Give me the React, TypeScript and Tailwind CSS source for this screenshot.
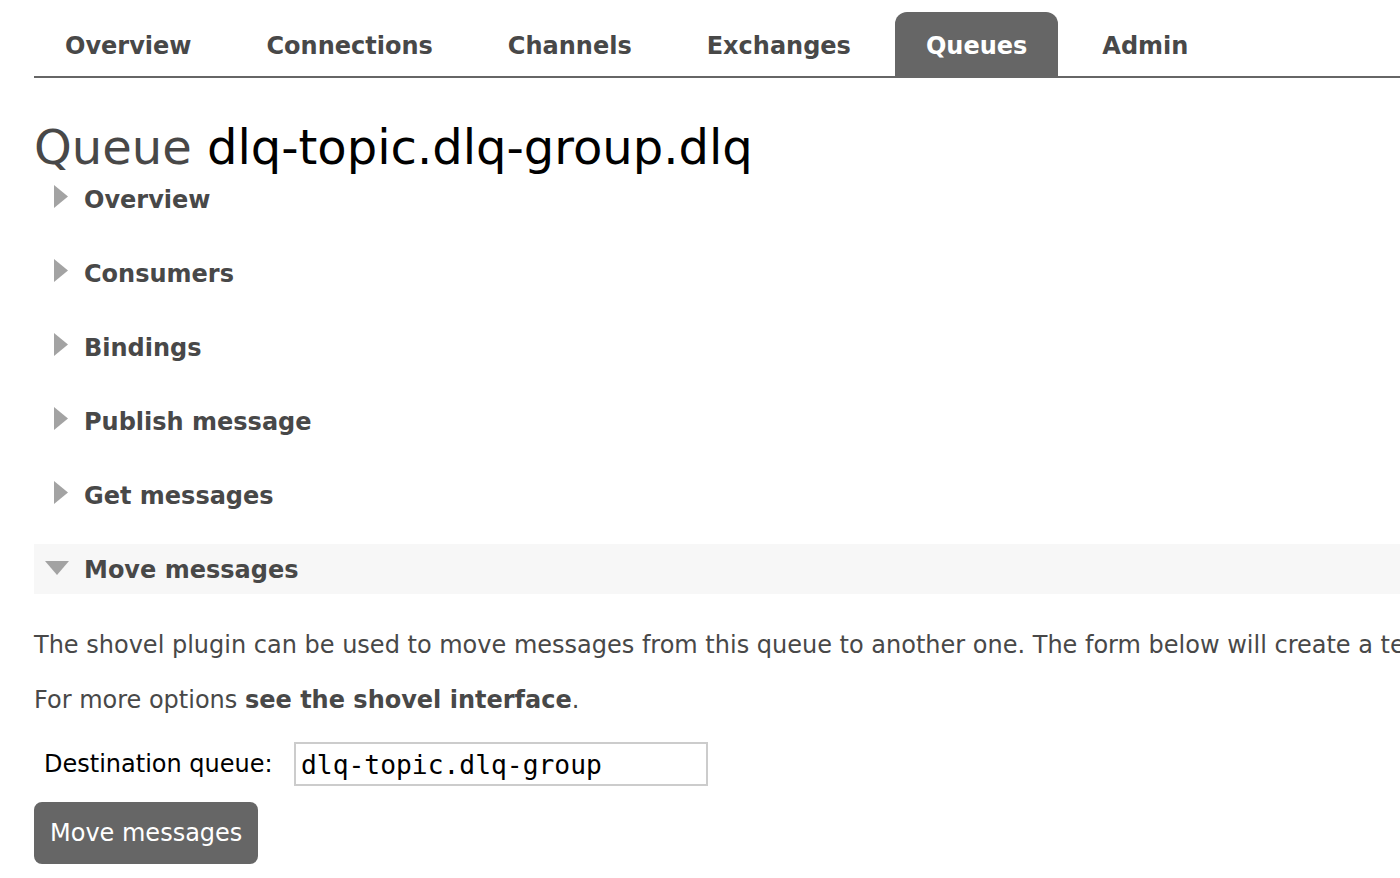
import React from "react";

const tabs = ["Overview", "Connections", "Channels", "Exchanges", "Queues", "Admin"];
const sections = ["Overview", "Consumers", "Bindings", "Publish message", "Get messages"];

function RightArrow() {
  return (
    <svg width="14" height="23" viewBox="0 0 14 23" className="shrink-0">
      <path d="M0 0 L14 11.5 L0 23 Z" fill="#a3a3a3" />
    </svg>
  );
}

function DownArrow() {
  return (
    <svg width="24" height="14" viewBox="0 0 24 14" className="shrink-0">
      <path d="M0 0 L24 0 L12 14 Z" fill="#a3a3a3" />
    </svg>
  );
}

export default function App() {
  return (
    <div className="w-[1400px] h-[878px] overflow-hidden bg-white text-[#484848] font-['DejaVu_Sans',Verdana,sans-serif] whitespace-nowrap">
      <div className="pl-[34px]">
        {/* tabs */}
        <div className="flex gap-[13px] pt-[12px] border-b-2 border-[#666]">
          {tabs.map((t) => (
            <div
              key={t}
              className={`h-[64px] px-[31px] pt-[3px] flex items-center rounded-t-[12px] text-[24px] font-bold ${
                t === "Queues" ? "bg-[#666] text-white" : "text-[#484848]"
              }`}
            >
              {t}
            </div>
          ))}
        </div>

        <h1 className="mt-[41px] text-[48px] leading-[56px] font-normal">
          Queue <span className="text-black">dlq-topic.dlq-group.dlq</span>
        </h1>

        <div className="flex flex-col gap-[24px] mt-[-1px]">
          {sections.map((s) => (
            <div key={s} className="h-[50px] flex items-center pl-[20px] gap-[16px]">
              <div className="mt-[-5px]">
                <RightArrow />
              </div>
              <span className="text-[24px] font-bold pt-[2px]">{s}</span>
            </div>
          ))}
          <div className="h-[50px] flex items-center pl-[11px] gap-[15px] bg-[#f7f7f7]">
            <div className="mt-[-2px]">
              <DownArrow />
            </div>
            <span className="text-[24px] font-bold pt-[2px]">Move messages</span>
          </div>
        </div>

        <div className="text-[24px] leading-[30px]">
          <p className="mt-[36px]">
            The shovel plugin can be used to move messages from this queue to another one. The form below will create a temporary shovel to move messages to another queue on the same virtual host, with default settings.
          </p>
          <p className="mt-[25px]">
            For more options <span className="font-bold">see the shovel interface</span>.
          </p>
        </div>

        <div className="flex items-center mt-[27px] pl-[10px]">
          <label className="text-[24px] text-black w-[250px]">Destination queue:</label>
          <div className="w-[414px] h-[44px] border-2 border-[#ccc] flex items-center px-[5px] pt-[3px]">
            <span className="text-[26.3px] text-black font-['DejaVu_Sans_Mono',monospace]">dlq-topic.dlq-group</span>
          </div>
        </div>

        <button className="mt-[16px] h-[62px] px-[16px] rounded-[8px] bg-[#666] text-white text-[24px]">
          Move messages
        </button>
      </div>
    </div>
  );
}
